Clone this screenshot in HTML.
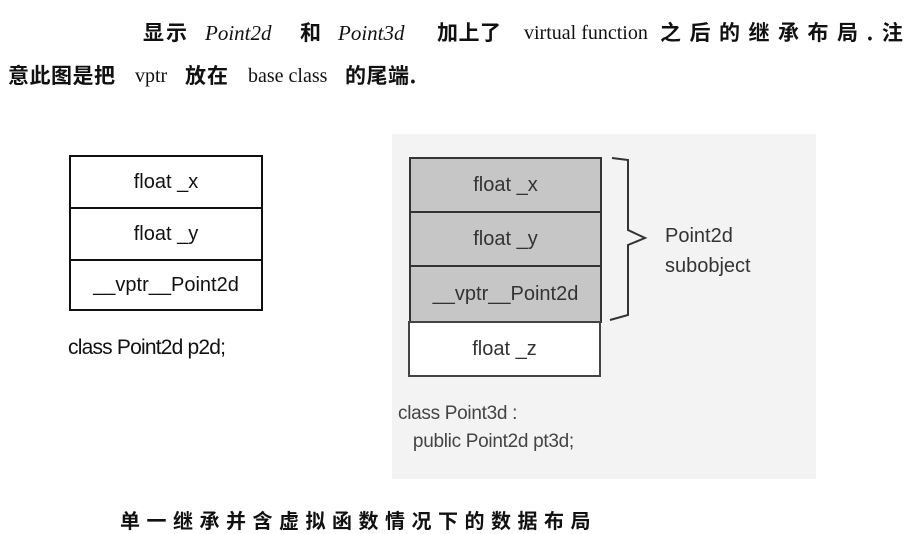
<!DOCTYPE html>
<html><head><meta charset="utf-8"><style>
body{margin:0;width:920px;height:533px;background:#fff;position:relative;overflow:hidden;font-family:"Liberation Serif","Noto Serif CJK SC",serif;color:#111}
.t{position:absolute;white-space:nowrap;font-size:20px;line-height:24px;height:24px}
.cj{font-family:"Noto Sans CJK SC",sans-serif;font-weight:bold;font-size:21px}
.sa{font-family:"Liberation Sans",sans-serif}
.box{position:absolute;border:2px solid #111;box-sizing:border-box;display:flex;align-items:center;justify-content:center;font-family:"Liberation Sans",sans-serif;font-size:20px}
.g{background:#c6c6c6;border-color:#333;color:#333}
</style></head><body>
<div class="t cj" style="left:143px;top:20px;letter-spacing:2px">显示</div>
<div class="t" style="left:205px;top:21px;font-size:21px"><i>Point2d</i></div>
<div class="t cj" style="left:300px;top:20px">和</div>
<div class="t" style="left:338px;top:21px;font-size:21px"><i>Point3d</i></div>
<div class="t cj" style="left:437px;top:20px;letter-spacing:0.5px">加上了</div>
<div class="t" style="left:524px;top:21px">virtual function</div>
<div class="t cj" style="left:660px;top:20px;letter-spacing:8.5px">之后的继承布局.注</div>

<div class="t cj" style="left:8px;top:63px;letter-spacing:0.5px">意此图是把</div>
<div class="t" style="left:135px;top:64px">vptr</div>
<div class="t cj" style="left:185px;top:63px;letter-spacing:1px">放在</div>
<div class="t" style="left:248px;top:64px">base class</div>
<div class="t cj" style="left:345px;top:63px;letter-spacing:0.5px">的尾端.</div>

<div class="box" style="left:69px;top:155px;width:194px;height:54px">float _x</div>
<div class="box" style="left:69px;top:207px;width:194px;height:54px">float _y</div>
<div class="box" style="left:69px;top:259px;width:194px;height:52px">__vptr__Point2d</div>
<div class="t sa" style="left:68px;top:336px;font-size:21px;letter-spacing:-0.8px">class Point2d p2d;</div>

<div style="position:absolute;left:392px;top:134px;width:424px;height:345px;background:#f3f3f3"></div>
<div class="box g" style="left:409px;top:157px;width:193px;height:56px">float _x</div>
<div class="box g" style="left:409px;top:211px;width:193px;height:56px">float _y</div>
<div class="box g" style="left:409px;top:265px;width:193px;height:58px">__vptr__Point2d</div>
<div class="box" style="left:408px;top:321px;width:193px;height:56px;background:#fff;border-color:#444;color:#333">float _z</div>
<svg style="position:absolute;left:600px;top:155px" width="50" height="170"><path d="M12 3 L28 5 L28 75 L45 83 L28 90 L28 160 L10 165" fill="none" stroke="#333" stroke-width="2"/></svg>
<div class="t sa" style="left:665px;top:221px;font-size:20px;color:#333;line-height:30px;height:60px">Point2d<br>subobject</div>
<div class="t sa" style="left:398px;top:400px;font-size:19px;color:#444;line-height:28px;height:56px;letter-spacing:-0.3px">class Point3d :<br>&nbsp;&nbsp;&nbsp;public Point2d pt3d;</div>

<div class="t cj" style="left:120px;top:508px;font-size:20px;letter-spacing:6.5px">单一继承并含虚拟函数情况下的数据布局</div>
</body></html>
